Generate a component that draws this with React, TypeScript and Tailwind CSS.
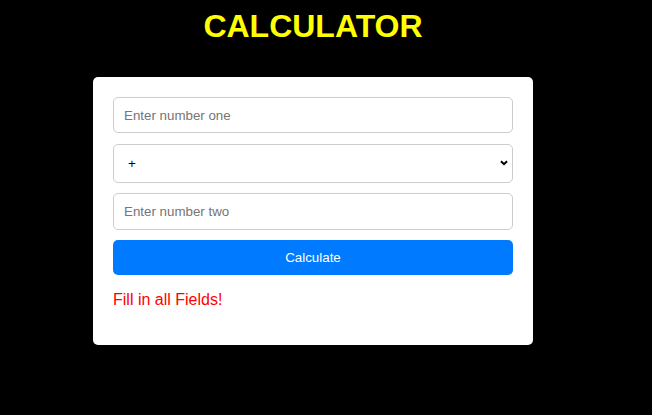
import { useState } from "react";

const OPERATORS = ["+", "-", "*", "/"];

export default function App() {
  const [first, setFirst] = useState("");
  const [op, setOp] = useState("+");
  const [second, setSecond] = useState("");
  const [result, setResult] = useState<string>("Fill in all Fields!");

  function calculate() {
    if (first.trim() === "" || second.trim() === "") {
      setResult("Fill in all Fields!");
      return;
    }
    const a = Number(first);
    const b = Number(second);
    let value = 0;
    if (op === "+") value = a + b;
    if (op === "-") value = a - b;
    if (op === "*") value = a * b;
    if (op === "/") value = a / b;
    setResult(String(value));
  }

  return (
    <div className="min-h-[415px] w-full bg-black font-['Liberation_Sans',Arial,sans-serif]">
      <div className="flex w-[626px] flex-col items-center">
        <h1 className="mt-2 text-[32px] font-bold leading-[36px] text-[#ffff00]">
          CALCULATOR
        </h1>
        <div className="mt-[33px] flex w-[440px] flex-col rounded-[5px] bg-white px-5 pt-5 pb-9">
          <input
            placeholder="Enter number one"
            value={first}
            onChange={(event) => setFirst(event.target.value)}
            className="h-9 rounded-[5px] border border-[#cccccc] px-[10px] text-[13.33px] text-black outline-none placeholder:text-[#757575]"
          />
          <div className="relative mt-[11px]">
            <select
              value={op}
              onChange={(event) => setOp(event.target.value)}
              className="h-[39px] w-full appearance-none rounded-[5px] border border-[#cccccc] bg-white px-[14px] text-[13.33px] text-black outline-none"
            >
              {OPERATORS.map((o) => (
                <option key={o} value={o}>
                  {o}
                </option>
              ))}
            </select>
            <svg
              viewBox="0 0 8 6"
              className="pointer-events-none absolute top-[16px] right-[5px] h-[6px] w-[8px]"
            >
              <path d="M1 1.2 L4 4.2 L7 1.2" fill="none" stroke="#000" strokeWidth="2" />
            </svg>
          </div>
          <input
            placeholder="Enter number two"
            value={second}
            onChange={(event) => setSecond(event.target.value)}
            className="mt-[10px] h-[37px] rounded-[5px] border border-[#cccccc] px-[10px] text-[13.33px] text-black outline-none placeholder:text-[#757575]"
          />
          <button
            type="button"
            onClick={calculate}
            className="mt-[10px] h-[35px] rounded-[5px] bg-[#007bff] text-[13.33px] text-white"
          >
            Calculate
          </button>
          <p className="mt-4 text-base leading-[18px] text-[#ff0000]">{result}</p>
        </div>
      </div>
    </div>
  );
}
